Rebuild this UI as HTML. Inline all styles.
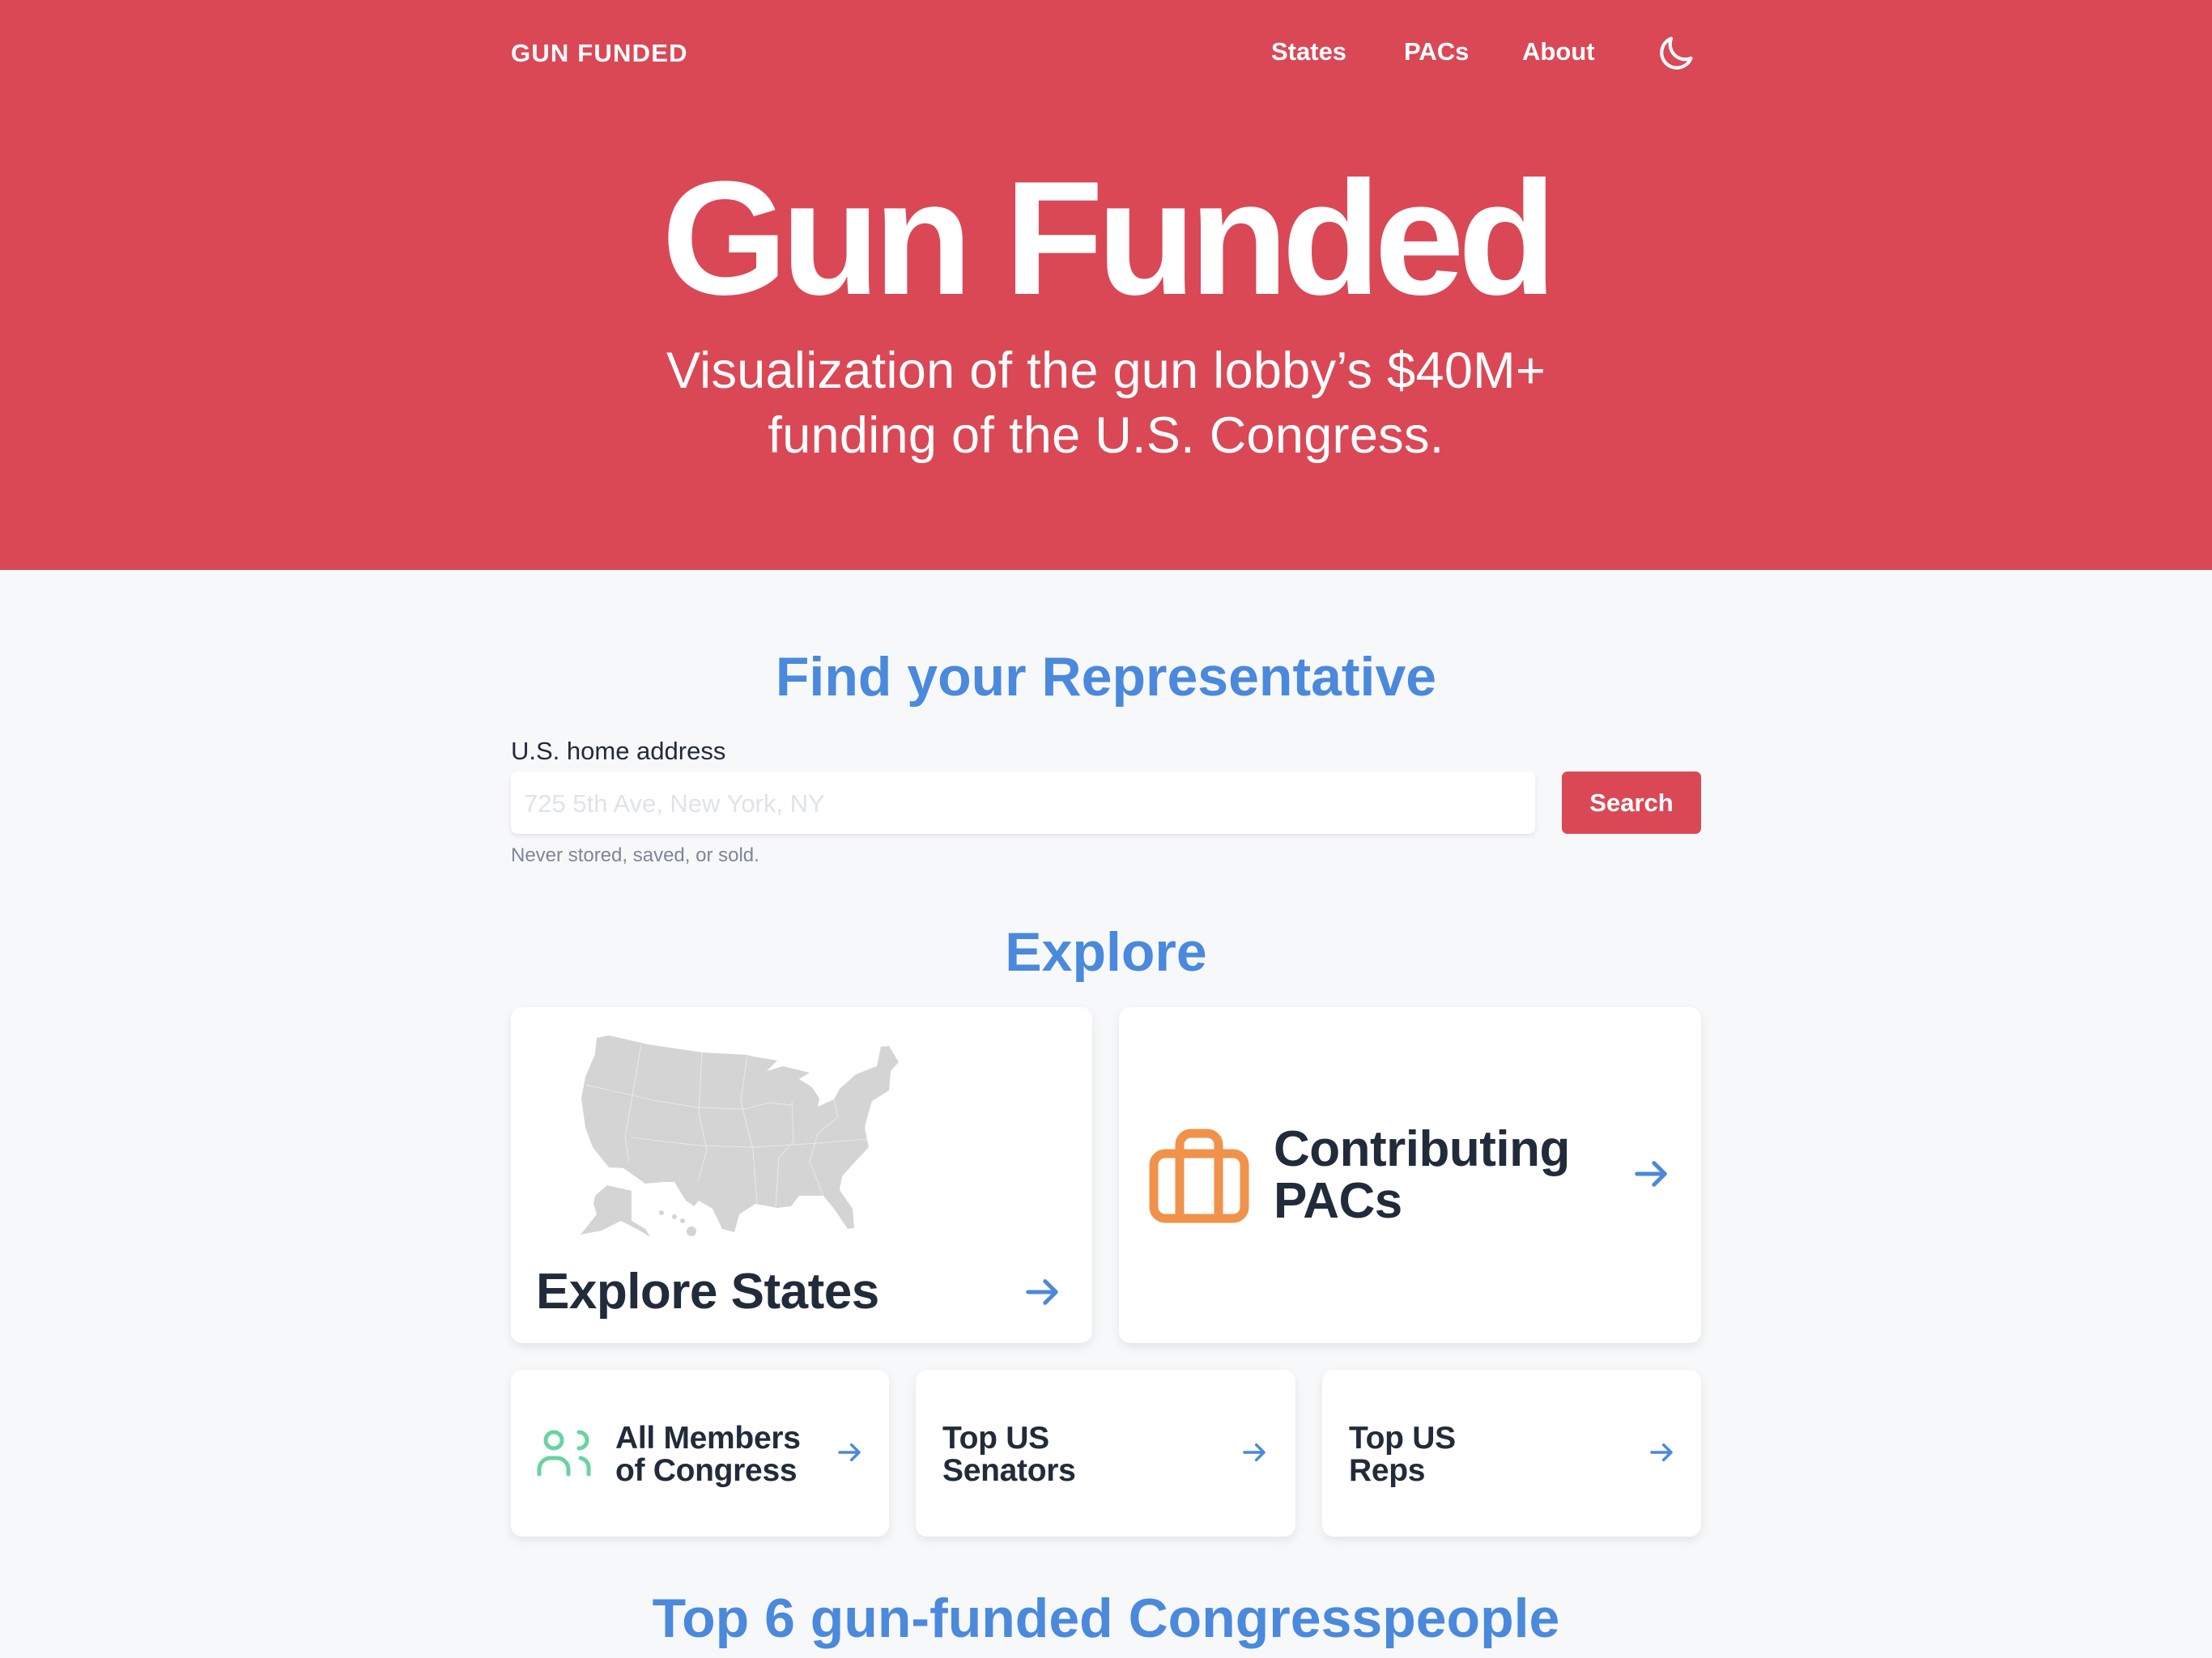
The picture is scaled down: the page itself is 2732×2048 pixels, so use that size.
<!DOCTYPE html>
<html><head><meta charset="utf-8">
<style>
*{margin:0;padding:0;box-sizing:border-box}
html,body{width:2732px;height:2048px;overflow:hidden;background:#f7f8fa;font-family:"Liberation Sans",sans-serif}
.hero{position:absolute;left:0;top:0;width:2732px;height:704px;background:#da4856;color:#fff}
.logo{position:absolute;left:631px;top:48px;font-size:31px;font-weight:bold;letter-spacing:1.2px}
.nav{position:absolute;top:46px;font-size:31px;font-weight:bold}
.title{position:absolute;left:0;width:2732px;top:175px;text-align:center;font-size:200px;font-weight:bold;letter-spacing:-8px;line-height:240px}
.sub{position:absolute;left:0;width:2732px;top:418px;text-align:center;font-size:63px;line-height:80px;letter-spacing:0.3px}
.h2{position:absolute;left:0;width:2732px;text-align:center;color:#4a89dc;font-weight:bold;font-size:68px;letter-spacing:0}
.label{position:absolute;left:631px;top:910px;font-size:31px;color:#222b3a}
.input{position:absolute;left:631px;top:953px;width:1265px;height:77px;background:#fff;border-radius:8px;box-shadow:0 3px 6px rgba(0,0,0,0.08);font-size:31px;color:#dfe3ea;padding:22px 16px}
.btn{position:absolute;left:1929px;top:953px;width:172px;height:77px;background:#da4856;border-radius:7px;color:#fff;font-weight:bold;font-size:31px;text-align:center;line-height:77px}
.note{position:absolute;left:631px;top:1043px;font-size:24px;color:#7c8697}
.card{position:absolute;background:#fff;border-radius:14px;box-shadow:0 5px 12px rgba(0,0,0,0.08)}
.big{font-size:62px;font-weight:bold;color:#222b3a;position:absolute;line-height:64px;letter-spacing:-0.5px}
.sm{font-size:39px;font-weight:bold;color:#222b3a;position:absolute;line-height:40px;letter-spacing:-0.3px}
svg{position:absolute}
</style></head><body>
<div class="hero">
  <div class="logo">GUN FUNDED</div>
  <div class="nav" style="left:1570px">States</div>
  <div class="nav" style="left:1734px">PACs</div>
  <div class="nav" style="left:1880px">About</div>
  <svg style="left:2046px;top:40px" width="50" height="50" viewBox="0 0 24 24" fill="none" stroke="#fff" stroke-width="2" stroke-linecap="round" stroke-linejoin="round"><path d="M20.35 15.35A9 9 0 0 1 8.65 3.65 9 9 0 1 0 20.35 15.35z"/></svg>
  <div class="title">Gun Funded</div>
  <div class="sub">Visualization of the gun lobby’s $40M+<br>funding of the U.S. Congress.</div>
</div>

<div class="h2" style="top:797px">Find your Representative</div>
<div class="label">U.S. home address</div>
<div class="input">725 5th Ave, New York, NY</div>
<div class="btn">Search</div>
<div class="note">Never stored, saved, or sold.</div>

<div class="h2" style="top:1137px">Explore</div>

<div class="card" style="left:631px;top:1244px;width:718px;height:415px"></div>
<svg style="left:700px;top:1260px" width="440" height="290" viewBox="0 0 440 290">
 <g fill="#d4d4d4">
 <path d="M37 22 L52 19 L100 30 L167 40 L223 43 L230 45 L260 50 L247 63 L267 57 L300 65 L287 73 L277 100 L287 73 L303 83 L312 97 L310 107 L330 98 L337 85 L357 67 L383 57 L388 33 L398 32 L410 52 L400 63 L398 87 L377 100 L372 117 L368 133 L373 157 L358 173 L340 193 L337 210 L353 233 L355 257 L347 258 L330 233 L317 217 L287 217 L277 230 L260 232 L233 227 L213 240 L207 262 L192 258 L180 233 L163 223 L157 230 L147 223 L133 200 L120 200 L97 202 L70 183 L52 182 L32 157 L23 133 L18 97 L23 70 L35 42 Z"/>
 <path d="M35 217 L50 204 L80 211 L80 248 L97 258 L103 268 L90 260 L67 248 L43 260 L17 265 L37 240 L33 227 Z"/>
 <circle cx="117" cy="238" r="3"/><circle cx="133" cy="243" r="3"/><circle cx="143" cy="248" r="3"/><circle cx="154" cy="261" r="6"/>
 </g>
 <g stroke="#eeeeee" stroke-width="0.8" fill="none">
 <path d="M23 80 L112 100 L163 108 L220 110 L250 102 L277 105"/>
 <path d="M80 145 L120 150 L165 155 L228 157 L265 155 L310 152 L372 147"/>
 <path d="M167 40 L163 115 L173 160 L162 200"/>
 <path d="M223 43 L215 100 L230 160 L235 227"/>
 <path d="M92 30 L72 145 L77 175"/>
 <path d="M278 100 L280 150 L262 170 L258 230"/>
 <path d="M330 98 L335 120 L310 140 L300 175 L317 217"/>
 </g>
</svg>
<div class="big" style="left:662px;top:1564px">Explore States</div>
<svg style="left:1262px;top:1573px" width="50" height="46" viewBox="0 0 24 24" fill="none" stroke="#4a89dc" stroke-width="2.6" stroke-linecap="round" stroke-linejoin="round"><path d="M3 12h18M14 5l7 7-7 7"/></svg>

<div class="card" style="left:1382px;top:1244px;width:719px;height:415px"></div>
<svg style="left:1414px;top:1392px" width="130" height="120" viewBox="0 0 130 120" fill="none" stroke="#f0924a" stroke-width="11" stroke-linejoin="round"><rect x="11" y="33" width="112" height="80" rx="14"/><path d="M43 113 V22 a14 14 0 0 1 14 -14 h20 a14 14 0 0 1 14 14 V113"/></svg>
<div class="big" style="left:1573px;top:1388px">Contributing<br>PACs</div>
<svg style="left:2014px;top:1427px" width="50" height="46" viewBox="0 0 24 24" fill="none" stroke="#4a89dc" stroke-width="2.6" stroke-linecap="round" stroke-linejoin="round"><path d="M3 12h18M14 5l7 7-7 7"/></svg>

<div class="card" style="left:631px;top:1692px;width:467px;height:206px"></div>
<svg style="left:660px;top:1765px" width="70" height="60" viewBox="0 0 70 60" fill="none" stroke="#68d3a0" stroke-width="5" stroke-linecap="round"><circle cx="24" cy="14" r="10"/><path d="M55 4 a10 10 0 0 1 0 20"/><path d="M6 56 V50 a14 14 0 0 1 14 -14 h8 a14 14 0 0 1 14 14 V56"/><path d="M57 36 a12 12 0 0 1 10 12 V56"/></svg>
<div class="sm" style="left:760px;top:1757px">All Members<br>of Congress</div>
<svg style="left:1032px;top:1778px" width="34" height="32" viewBox="0 0 24 24" fill="none" stroke="#4a89dc" stroke-width="2.6" stroke-linecap="round" stroke-linejoin="round"><path d="M3 12h18M14 5l7 7-7 7"/></svg>

<div class="card" style="left:1131px;top:1692px;width:469px;height:206px"></div>
<div class="sm" style="left:1164px;top:1757px">Top US<br>Senators</div>
<svg style="left:1532px;top:1778px" width="34" height="32" viewBox="0 0 24 24" fill="none" stroke="#4a89dc" stroke-width="2.6" stroke-linecap="round" stroke-linejoin="round"><path d="M3 12h18M14 5l7 7-7 7"/></svg>

<div class="card" style="left:1633px;top:1692px;width:468px;height:206px"></div>
<div class="sm" style="left:1666px;top:1757px">Top US<br>Reps</div>
<svg style="left:2035px;top:1778px" width="34" height="32" viewBox="0 0 24 24" fill="none" stroke="#4a89dc" stroke-width="2.6" stroke-linecap="round" stroke-linejoin="round"><path d="M3 12h18M14 5l7 7-7 7"/></svg>

<div class="h2" style="top:1960px">Top 6 gun-funded Congresspeople</div>
</body></html>
